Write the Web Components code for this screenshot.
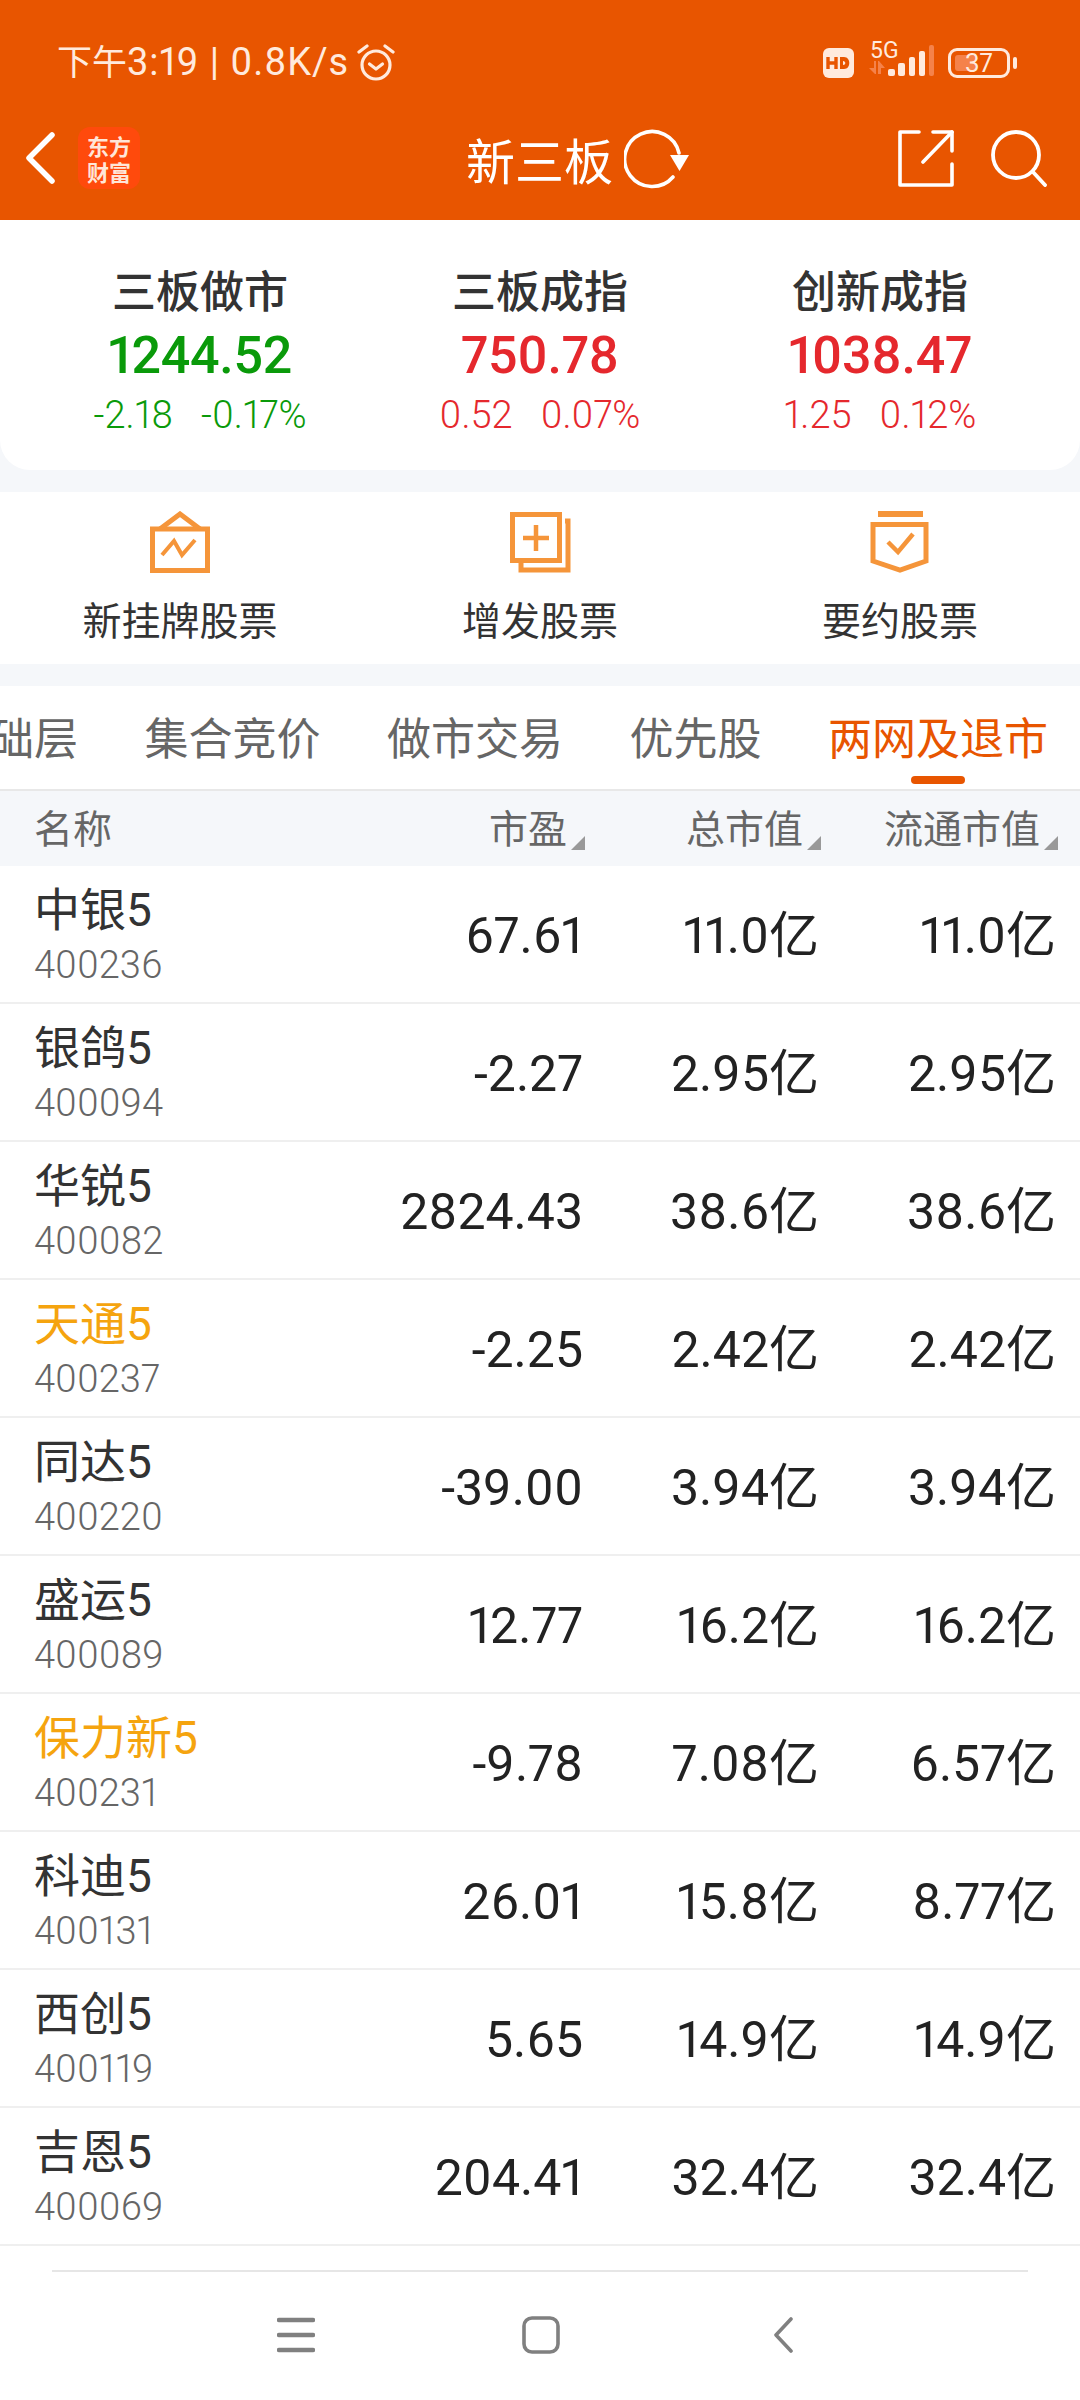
<!DOCTYPE html>
<html lang="zh">
<head>
<meta charset="utf-8">
<title>新三板</title>
<style>
html, body { margin: 0; padding: 0; background: #fff; }
body { width: 1080px; height: 2400px; overflow: hidden; font-family: "Roboto", "Noto Sans CJK SC", sans-serif; font-variant-numeric: proportional-nums; }
</style>
</head>
<body>
<app-header title="新三板"></app-header>
<index-summary></index-summary>
<quick-entries></quick-entries>
<tab-strip></tab-strip>
<stock-table></stock-table>
<bottom-nav></bottom-nav>

<script>
const FONT = '"Roboto", "Noto Sans CJK SC", sans-serif';

const headerTemplate = document.createElement('template');
headerTemplate.innerHTML = `
<style>
:host { display: block; background: #e85500; height: 220px; color: #fff; font-family: ${FONT}; }
.status { display: flex; align-items: center; height: 122px; padding: 3px 62px 0 57px; box-sizing: border-box; color: #ffeadd; }
.clock { font-size: 38px; line-height: 46px; white-space: nowrap; letter-spacing: 0.9px; }
.clock span { font-size: 35px; letter-spacing: 0; }
.alarm { margin-left: 8px; }
.right { margin-left: auto; display: flex; align-items: center; gap: 15px; }
.net { position: relative; width: 64px; height: 46px; }
.net span { position: absolute; left: 1px; top: -1px; font-size: 23px; line-height: 24px; }
.net svg { position: absolute; left: 0; top: 12px; overflow: visible; }
.battery { position: relative; width: 62px; height: 30px; border: 3px solid #ffeadd; border-radius: 9px; box-sizing: border-box; margin-right: 8px; display: flex; align-items: center; justify-content: center; font-size: 26px; }
.battery i { position: absolute; left: 4px; top: 4px; bottom: 4px; width: 20px; background: #f5824a; border-radius: 3px; }
.battery b { position: relative; font-weight: 400; }
.battery::after { content: ""; position: absolute; right: -10px; top: 6px; width: 4px; height: 12px; background: #ffeadd; border-radius: 2px; }
.nav { display: flex; align-items: center; height: 98px; padding: 0 33px 26px 25px; position: relative; box-sizing: border-box; }
.logo { width: 62px; height: 62px; margin-left: 23px; background: #ff4a0c; border-radius: 12px; font: 700 22px/26px "Noto Sans CJK SC", sans-serif; color: #ffe6d8; text-align: center; display: flex; align-items: center; justify-content: center; }
.center { position: absolute; left: 466px; top: 0; height: 72px; display: flex; align-items: center; gap: 11px; font: 400 49px "Noto Sans CJK SC", sans-serif; }
.actions { margin-left: auto; display: flex; align-items: center; gap: 37px; }
svg { display: block; }
</style>
<div class="status">
    <span class="clock"><span>下午</span>3:19 | 0.8K/s</span>
    <svg class="alarm" width="38" height="40" viewBox="0 0 38 40" fill="none" stroke="#ffeadd" stroke-width="3.2" stroke-linecap="round" stroke-linejoin="round">
        <circle cx="19" cy="22" r="14"/>
        <path d="M12.5 21l6.5 5 6.5-5"/>
        <path d="M2 9l8-6M36 9l-8-6"/>
    </svg>
    <div class="right">
        <svg width="31" height="30" viewBox="0 0 31 30">
            <rect width="31" height="30" rx="6" fill="#ffeadd"/>
            <path d="M5 9v12M13 9v12M5 15h8" stroke="#e85500" stroke-width="3.4" fill="none"/>
            <path d="M17 9h4c7 0 7 12 0 12h-4z" fill="#e85500"/>
            <path d="M20 13v4c3 0 3-4 0-4z" fill="#ffeadd"/>
        </svg>
        <div class="net">
            <span>5G</span>
            <svg width="64" height="34" viewBox="0 0 64 34">
                <path d="M0 16h5v-7h2v13h-1zM9 9h1l6 7h-4v6h-3z" fill="#f5824a"/>
                <rect x="19" y="17" width="7" height="7" rx="2" fill="#ffeadd"/>
                <rect x="29" y="11" width="7" height="13" rx="2" fill="#ffeadd"/>
                <rect x="40" y="5" width="6" height="19" rx="2" fill="#ffeadd"/>
                <rect x="50" y="-1" width="6" height="25" rx="2" fill="#ffeadd"/>
                <rect x="60" y="-7" width="5" height="31" rx="2" fill="#f5824a"/>
            </svg>
        </div>
        <div class="battery"><i></i><b>37</b></div>
    </div>
</div>
<div class="nav">
    <svg width="30" height="52" viewBox="0 0 30 52" fill="none" stroke="#fff" stroke-width="5.5" stroke-linecap="round" stroke-linejoin="round"><path d="M27 3L4 26l23 23"/></svg>
    <div class="logo"><span>东方<br>财富</span></div>
    <div class="center">
        <span id="title"></span>
        <svg width="66" height="62" viewBox="0 0 66 62" fill="none">
            <path d="M49 50A27.5 27.5 0 1 1 55 26" stroke="#fff" stroke-width="3.6" stroke-linecap="round"/>
            <path d="M46 28h19l-9.500 16z" fill="#fff"/>
        </svg>
    </div>
    <div class="actions">
        <svg width="56" height="57" viewBox="0 0 56 57" fill="none" stroke="#fff" stroke-width="3.6" stroke-linejoin="round" stroke-linecap="round">
            <path d="M21 2H2v53h52V34"/>
            <path d="M35 2h19v19"/>
            <path d="M54 2L25 32"/>
        </svg>
        <svg width="56" height="57" viewBox="0 0 56 57" fill="none" stroke="#fff" stroke-width="3.8" stroke-linecap="round">
            <circle cx="25" cy="25" r="23"/>
            <path d="M42 42l12 13"/>
        </svg>
    </div>
</div>
`;

class AppHeader extends HTMLElement {
    constructor() {
        super();
        this.attachShadow({ mode: 'open' });
        this.shadowRoot.appendChild(headerTemplate.content.cloneNode(true));
    }
    connectedCallback() {
        this.shadowRoot.querySelector('#title').textContent = this.getAttribute('title');
    }
}
customElements.define('app-header', AppHeader);

const indexCardTemplate = document.createElement('template');
indexCardTemplate.innerHTML = `
<style>
:host { display: flex; flex-direction: column; align-items: center; width: 340px; font-family: ${FONT}; --up: #e5282d; --down: #0a9a0a; }
:host([dir-down]) .price, :host([dir-down]) .change { color: var(--down); }
.name { font: 500 44px/58px "Noto Sans CJK SC", sans-serif; color: #333; }
.price { font-size: 52px; line-height: 62px; margin-top: 7px; font-weight: 500; color: var(--up); letter-spacing: -0.3px; }
.change { display: flex; gap: 28px; margin-top: 6px; font-size: 38px; line-height: 44px; color: var(--up); font-weight: 300; }
</style>
<div class="name"></div>
<div class="price"></div>
<div class="change"><span class="amount"></span><span class="pct"></span></div>
`;

class IndexCard extends HTMLElement {
    constructor() {
        super();
        this.attachShadow({ mode: 'open' });
        this.shadowRoot.appendChild(indexCardTemplate.content.cloneNode(true));
    }
    connectedCallback() {
        const root = this.shadowRoot;
        root.querySelector('.name').textContent = this.getAttribute('name');
        root.querySelector('.price').textContent = this.getAttribute('price');
        root.querySelector('.amount').textContent = this.getAttribute('amount');
        root.querySelector('.pct').textContent = this.getAttribute('pct');
    }
}
customElements.define('index-card', IndexCard);

const summaryTemplate = document.createElement('template');
summaryTemplate.innerHTML = `
<style>
:host { display: block; background: #f5f7fa; padding-bottom: 22px; }
.card { display: flex; justify-content: center; height: 250px; padding-top: 40px; box-sizing: border-box; background: #fff; border-radius: 0 0 30px 30px; }
</style>
<div class="card">
    <index-card dir-down name="三板做市" price="1244.52" amount="-2.18" pct="-0.17%"></index-card>
    <index-card name="三板成指" price="750.78" amount="0.52" pct="0.07%"></index-card>
    <index-card name="创新成指" price="1038.47" amount="1.25" pct="0.12%"></index-card>
</div>
`;

class IndexSummary extends HTMLElement {
    constructor() {
        super();
        this.attachShadow({ mode: 'open' });
        this.shadowRoot.appendChild(summaryTemplate.content.cloneNode(true));
    }
}
customElements.define('index-summary', IndexSummary);

const quickTemplate = document.createElement('template');
quickTemplate.innerHTML = `
<style>
:host { display: block; background: #f5f7fa; padding-bottom: 22px; }
.row { display: grid; grid-template-columns: repeat(3, 360px); height: 172px; background: #fff; }
.item { display: flex; flex-direction: column; align-items: center; padding-top: 19px; box-sizing: border-box; }
svg { display: block; }
span { margin-top: 17px; font: 400 39px/56px "Noto Sans CJK SC", sans-serif; color: #333; }
</style>
<div class="row">
    <div class="item">
        <svg width="62" height="62" viewBox="0 0 62 62" fill="none" stroke="#f5953a" stroke-width="5">
            <rect x="3.500" y="18" width="55" height="41.500"/>
            <path d="M11 18L31 3l20 15"/>
            <path d="M13 44l12-14 8 14 13-15" stroke-width="4"/>
        </svg>
        <span>新挂牌股票</span>
    </div>
    <div class="item">
        <svg width="62" height="62" viewBox="0 0 62 62" fill="none" stroke="#f5953a" stroke-width="5">
            <rect x="3.500" y="3.500" width="47" height="46"/>
            <path d="M56 10h3v49H12v-9"/>
            <path d="M27 14v26M14 27h26" stroke-width="4.500"/>
        </svg>
        <span>增发股票</span>
    </div>
    <div class="item">
        <svg width="62" height="62" viewBox="0 0 62 62" fill="none" stroke="#f5953a" stroke-width="5">
            <path d="M9 3h45" stroke-width="6"/>
            <path d="M4 13.500h53V50L31 59 4 50z"/>
            <path d="M19 31l10 10 15-18" stroke-width="4.500"/>
        </svg>
        <span>要约股票</span>
    </div>
</div>
`;

class QuickEntries extends HTMLElement {
    constructor() {
        super();
        this.attachShadow({ mode: 'open' });
        this.shadowRoot.appendChild(quickTemplate.content.cloneNode(true));
    }
}
customElements.define('quick-entries', QuickEntries);

const tabsTemplate = document.createElement('template');
tabsTemplate.innerHTML = `
<style>
:host { display: block; background: #fff; border-bottom: 2px solid #e8e8e8; }
.tabs { display: flex; justify-content: flex-end; gap: 66.5px; height: 103px; padding: 0 32px 0 0; overflow: hidden; box-sizing: border-box; }
.tab { position: relative; flex: none; font: 400 44px/100px "Noto Sans CJK SC", sans-serif; color: #666; height: 103px; }
.tab.active { color: #e85500; }
.tab.active::after { content: ""; position: absolute; left: 50%; bottom: 5px; width: 54px; height: 8px; margin-left: -27px; background: #e85500; border-radius: 4px; }
</style>
<div class="tabs"></div>
`;

class TabStrip extends HTMLElement {
    constructor() {
        super();
        this.attachShadow({ mode: 'open' });
        this.shadowRoot.appendChild(tabsTemplate.content.cloneNode(true));
    }
    connectedCallback() {
        const labels = ['基础层', '集合竞价', '做市交易', '优先股', '两网及退市'];
        const tabs = this.shadowRoot.querySelector('.tabs');
        labels.forEach((label, index) => {
            const tab = document.createElement('span');
            tab.className = 'tab';
            tab.textContent = label;
            tab.classList.toggle('active', index === labels.length - 1);
            tabs.appendChild(tab);
        });
    }
}
customElements.define('tab-strip', TabStrip);

const rowTemplate = document.createElement('template');
rowTemplate.innerHTML = `
<style>
:host { display: grid; grid-template-columns: 1fr 237px 236px 237px; align-items: center; height: 138px; padding: 0 24px 0 34px; box-sizing: border-box; border-bottom: 2px solid #efefef; font-family: ${FONT}; background: #fff; }
.name { font: 400 46px/58px "Roboto", "Noto Sans CJK SC", sans-serif; color: #333; }
:host([warn]) .name { color: #f5a40f; }
.code { font-size: 38px; line-height: 46px; margin-top: 3px; color: #666; font-weight: 300; }
.num { text-align: right; font-size: 50px; line-height: 60px; margin-top: 4px; color: #222; font-weight: 400; }
</style>
<div><div class="name"></div><div class="code"></div></div>
<div class="num pe"></div>
<div class="num total"></div>
<div class="num flow"></div>
`;

class StockRow extends HTMLElement {
    constructor() {
        super();
        this.attachShadow({ mode: 'open' });
        this.shadowRoot.appendChild(rowTemplate.content.cloneNode(true));
    }
    connectedCallback() {
        const root = this.shadowRoot;
        root.querySelector('.name').textContent = this.getAttribute('name');
        root.querySelector('.code').textContent = this.getAttribute('code');
        root.querySelector('.pe').textContent = this.getAttribute('pe');
        root.querySelector('.total').textContent = this.getAttribute('total');
        root.querySelector('.flow').textContent = this.getAttribute('flow');
    }
}
customElements.define('stock-row', StockRow);

const tableTemplate = document.createElement('template');
tableTemplate.innerHTML = `
<style>
:host { display: block; }
.head { display: grid; grid-template-columns: 1fr 237px 236px 237px; align-items: center; height: 75px; padding: 0 22px 6px 34px; box-sizing: border-box; background: #f5f7fa; font: 400 39px "Noto Sans CJK SC", sans-serif; color: #666; }
.sort { position: relative; text-align: right; padding-right: 18px; }
.sort::after { content: ""; position: absolute; right: 0; bottom: 4px; border-left: 14px solid transparent; border-bottom: 14px solid #999; }
</style>
<div class="head">
    <span>名称</span>
    <span class="sort">市盈</span>
    <span class="sort">总市值</span>
    <span class="sort">流通市值</span>
</div>
<div class="body"></div>
`;

const STOCKS = [
    ['中银5', '400236', '67.61', '11.0亿', '11.0亿'],
    ['银鸽5', '400094', '-2.27', '2.95亿', '2.95亿'],
    ['华锐5', '400082', '2824.43', '38.6亿', '38.6亿'],
    ['天通5', '400237', '-2.25', '2.42亿', '2.42亿', true],
    ['同达5', '400220', '-39.00', '3.94亿', '3.94亿'],
    ['盛运5', '400089', '12.77', '16.2亿', '16.2亿'],
    ['保力新5', '400231', '-9.78', '7.08亿', '6.57亿', true],
    ['科迪5', '400131', '26.01', '15.8亿', '8.77亿'],
    ['西创5', '400119', '5.65', '14.9亿', '14.9亿'],
    ['吉恩5', '400069', '204.41', '32.4亿', '32.4亿'],
];

class StockTable extends HTMLElement {
    constructor() {
        super();
        this.attachShadow({ mode: 'open' });
        this.shadowRoot.appendChild(tableTemplate.content.cloneNode(true));
    }
    connectedCallback() {
        const body = this.shadowRoot.querySelector('.body');
        STOCKS.forEach(([name, code, pe, total, flow, warn]) => {
            const row = document.createElement('stock-row');
            row.setAttribute('name', name);
            row.setAttribute('code', code);
            row.setAttribute('pe', pe);
            row.setAttribute('total', total);
            row.setAttribute('flow', flow);
            if (warn) row.setAttribute('warn', '');
            body.appendChild(row);
        });
    }
}
customElements.define('stock-table', StockTable);

const navTemplate = document.createElement('template');
navTemplate.innerHTML = `
<style>
:host { display: block; background: #fff; padding: 24px 52px 0; }
.line { height: 2px; background: #e6e6e6; }
.keys { display: flex; justify-content: space-between; align-items: center; padding: 44px 235px 0 225px; }
svg { display: block; }
.home { margin-right: 6px; }
</style>
<div class="line"></div>
<div class="keys">
    <svg width="38" height="36" viewBox="0 0 38 36" fill="none" stroke="#808080" stroke-width="4.500" stroke-linecap="round"><path d="M2 3h34M2 18h34M2 33h34"/></svg>
    <svg class="home" width="38" height="38" viewBox="0 0 38 38" fill="none" stroke="#808080" stroke-width="3.600"><rect x="2" y="2" width="34" height="34" rx="8"/></svg>
    <svg width="20" height="36" viewBox="0 0 20 36" fill="none" stroke="#808080" stroke-width="3.600" stroke-linecap="round" stroke-linejoin="round"><path d="M18 2L3 18l15 16"/></svg>
</div>
`;

class BottomNav extends HTMLElement {
    constructor() {
        super();
        this.attachShadow({ mode: 'open' });
        this.shadowRoot.appendChild(navTemplate.content.cloneNode(true));
    }
}
customElements.define('bottom-nav', BottomNav);
</script>
</body>
</html>
